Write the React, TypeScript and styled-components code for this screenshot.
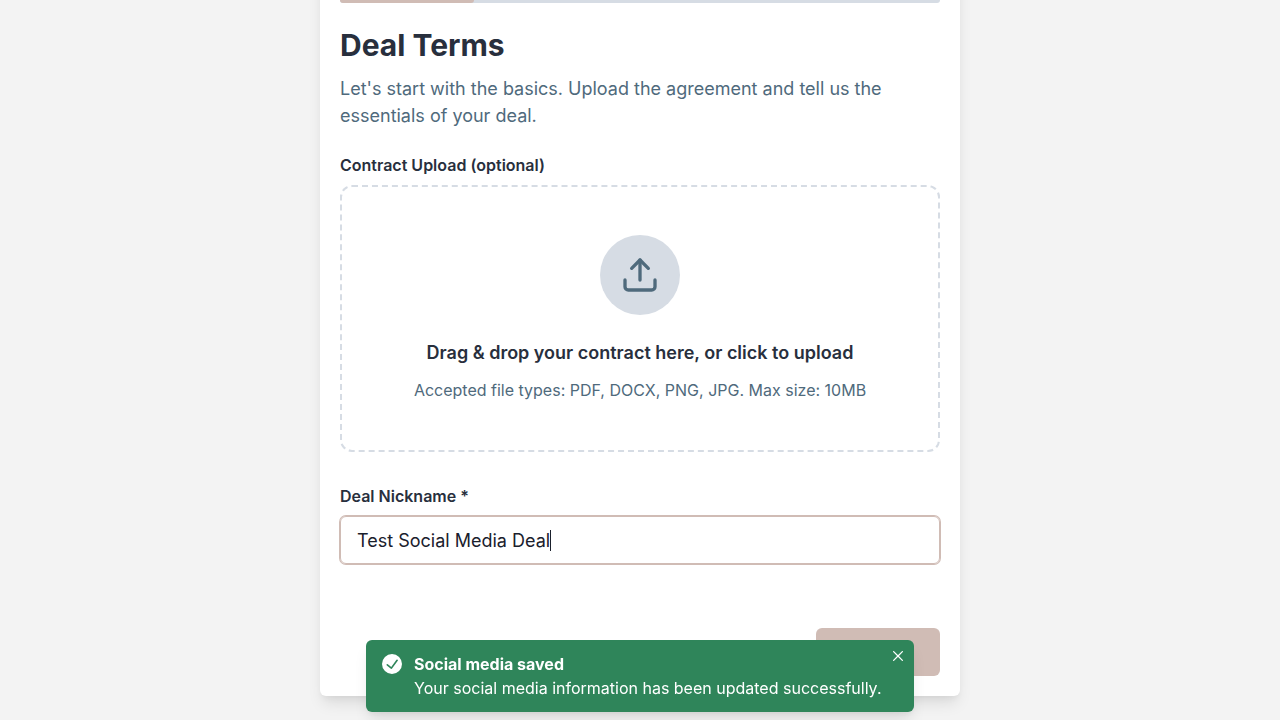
import React from "react";
import styled, { createGlobalStyle } from "styled-components";

const Global = createGlobalStyle`
  *, *::before, *::after { box-sizing: border-box; }
  body { margin: 0; background: #f3f3f3; font-family: Inter, sans-serif; color: #282f3d; }
  h1, p { margin: 0; }
`;
const Viewport = styled.main`
  height: 720px;
  overflow: hidden;
  display: flex;
  justify-content: center;
  align-items: flex-start;
`;
const Card = styled.section`
  width: 640px;
  height: 756px;
  margin-top: -60px;
  padding: 60px 20px 20px;
  background: #fff;
  border-radius: 6px;
  box-shadow: 0 10px 15px -3px rgba(0, 0, 0, 0.1), 0 4px 6px -2px rgba(0, 0, 0, 0.05);
  display: flex;
  flex-direction: column;
`;
const Track = styled.div`
  height: 3px;
  flex: none;
  background: #d6dce4;
  border-radius: 0 0 4px 4px;
  overflow: hidden;
`;
const Progress = styled.div`
  width: 134px;
  height: 3px;
  background: #d0bcb5;
  border-radius: 0 0 4px 0;
`;
const Title = styled.h1`
  margin-top: 24px;
  font-size: 30px;
  line-height: 36px;
  font-weight: 700;
`;
const Intro = styled.p`
  margin-top: 12px;
  font-size: 18px;
  line-height: 27px;
  color: #4f6a7c;
`;
const Label = styled.label<{ $top: number }>`
  margin-top: ${(p) => p.$top}px;
  font-size: 16px;
  line-height: 24px;
  font-weight: 600;
`;
const DropZone = styled.div`
  margin-top: 8px;
  height: 267px;
  border: 2px dashed #d6dce4;
  border-radius: 12px;
  display: flex;
  flex-direction: column;
  align-items: center;
  padding-top: 48px;
`;
const IconCircle = styled.div`
  width: 80px;
  height: 80px;
  border-radius: 50%;
  background: #d6dce4;
  display: flex;
  align-items: center;
  justify-content: center;
  color: #4f6a7c;
`;
const DropText = styled.p`
  margin-top: 24px;
  font-size: 18px;
  line-height: 27px;
  font-weight: 600;
`;
const Hint = styled.p`
  margin-top: 12px;
  font-size: 16px;
  line-height: 24px;
  color: #4f6a7c;
`;
const Field = styled.div`
  margin-top: 8px;
  height: 48px;
  padding: 0 16px;
  border-radius: 6px;
  border: 1px solid #d0bcb5;
  box-shadow: 0 0 0 1px #d0bcb5;
  display: flex;
  align-items: center;
  font-size: 18px;
  line-height: 22px;
  color: #1a202c;
`;
const FieldText = styled.span`
  padding-top: 2px;
`;
const Caret = styled.span`
  width: 1px;
  height: 21px;
  background: #1a202c;
`;
const Next = styled.button`
  align-self: flex-end;
  margin-top: auto;
  width: 124px;
  height: 48px;
  border: 0;
  border-radius: 6px;
  background: #d0bcb5;
`;
const Toast = styled.div`
  position: fixed;
  left: 366px;
  bottom: 8px;
  width: 548px;
  height: 72px;
  padding: 12px 32px 12px 16px;
  display: flex;
  gap: 12px;
  border-radius: 6px;
  background: #2f855a;
  color: #fff;
  box-shadow: 0 10px 15px -3px rgba(0, 0, 0, 0.1), 0 4px 6px -2px rgba(0, 0, 0, 0.05);
`;
const Status = styled.div`
  width: 20px;
  height: 24px;
  flex: none;
  svg { display: block; margin-top: 2px; }
`;
const Message = styled.div`
  font-size: 16px;
  line-height: 24px;
  white-space: nowrap;
`;
const MessageTitle = styled.div`
  font-weight: 700;
`;
const Close = styled.button`
  position: absolute;
  top: 4px;
  right: 4px;
  width: 24px;
  height: 24px;
  padding: 0;
  border: 0;
  background: none;
  color: #fff;
  display: flex;
  align-items: center;
  justify-content: center;
`;

export default function App() {
  return (
    <Viewport>
      <Global />
      <Card>
        <Track><Progress /></Track>
        <Title>Deal Terms</Title>
        <Intro>Let's start with the basics. Upload the agreement and tell us the essentials of your deal.</Intro>
        <Label $top={24}>Contract Upload (optional)</Label>
        <DropZone>
          <IconCircle>
            <svg width="40" height="40" viewBox="0 0 24 24" fill="none" stroke="currentColor" strokeWidth="2" strokeLinecap="round" strokeLinejoin="round">
              <path d="M21 15v4a2 2 0 0 1-2 2H5a2 2 0 0 1-2-2v-4" />
              <polyline points="17 8 12 3 7 8" />
              <line x1="12" y1="3" x2="12" y2="15" />
            </svg>
          </IconCircle>
          <DropText>Drag &amp; drop your contract here, or click to upload</DropText>
          <Hint>Accepted file types: PDF, DOCX, PNG, JPG. Max size: 10MB</Hint>
        </DropZone>
        <Label $top={32} id="nickname">Deal Nickname *</Label>
        <Field role="textbox" aria-labelledby="nickname" tabIndex={0}>
          <FieldText>Test Social Media Deal</FieldText>
          <Caret />
        </Field>
        <Next aria-label="Next" />
      </Card>
      <Toast role="status">
        <Status>
          <svg width="20" height="20" viewBox="0 0 24 24">
            <path fill="currentColor" d="M12,0A12,12,0,1,0,24,12,12.014,12.014,0,0,0,12,0Zm6.927,8.2-6.845,9.289a1.011,1.011,0,0,1-1.43.188L5.764,13.769a1,1,0,1,1,1.25-1.562l4.076,3.261,6.227-8.451A1,1,0,1,1,18.927,8.2Z" />
          </svg>
        </Status>
        <Message>
          <MessageTitle>Social media saved</MessageTitle>
          <div>Your social media information has been updated successfully.</div>
        </Message>
        <Close aria-label="Close">
          <svg width="10" height="10" viewBox="0 0 24 24">
            <path fill="currentColor" d="M.439,21.44a1.5,1.5,0,0,0,2.122,2.121L11.823,14.3a.25.25,0,0,1,.354,0l9.262,9.263a1.5,1.5,0,1,0,2.122-2.121L14.3,12.177a.25.25,0,0,1,0-.354l9.263-9.262A1.5,1.5,0,0,0,21.439.44L12.177,9.7a.25.25,0,0,1-.354,0L2.561.44A1.5,1.5,0,0,0,.439,2.561L9.7,11.823a.25.25,0,0,1,0,.354Z" />
          </svg>
        </Close>
      </Toast>
    </Viewport>
  );
}
